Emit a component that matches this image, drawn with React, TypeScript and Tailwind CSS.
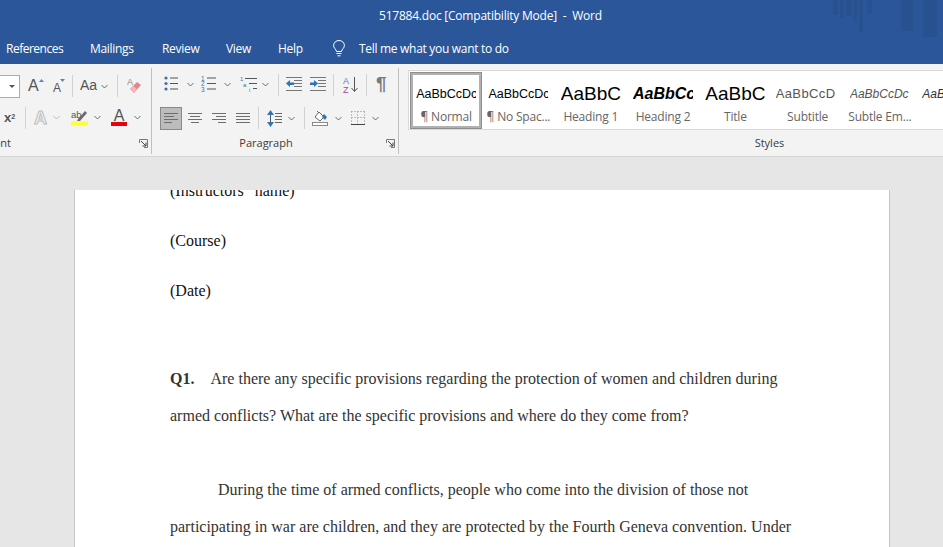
import type { ReactNode } from "react";

const ui = "font-['Open_Sans','Noto_Sans',sans-serif]";

const Chev = ({ className = "" }: { className?: string }) => (
  <svg width="7" height="5" viewBox="0 0 7 5" className={className}>
    <path d="M0.5 1l3 3 3-3" fill="none" stroke="#6a6a6a" strokeWidth="1" />
  </svg>
);

const Sep = ({ h = 22, className = "" }: { h?: number; className?: string }) => (
  <svg width="1" height={h} className={className}>
    <rect width="1" height={h} fill="#d2d2d2" />
  </svg>
);

const Launcher = () => (
  <svg width="9" height="9" viewBox="0 0 9 9">
    <path d="M.5 4V.5H8.5V8.5H5" fill="none" stroke="#777" />
    <path d="M2 2l5 5M7 3.5V7H3.5" fill="none" stroke="#444" />
  </svg>
);

const Lines = ({ rows, w = 14 }: { rows: [number, number, number][]; w?: number }) => (
  <svg width={w} height="15" viewBox={`0 0 ${w} 15`}>
    {rows.map(([x, y, l], i) => (
      <rect key={i} x={x} y={y} width={l} height="1" fill="#6d6d6d" />
    ))}
  </svg>
);

const Bullets = () => (
  <svg width="14" height="15" viewBox="0 0 14 15">
    {[2, 7.5, 13].map((y) => (
      <g key={y}>
        <circle cx="2" cy={y} r="1.6" fill="#41719c" />
        <rect x="6" y={y - 0.5} width="8" height="1" fill="#555" />
      </g>
    ))}
  </svg>
);

const Numbering = () => (
  <svg width="15" height="16" viewBox="0 0 15 16">
    {[3, 8.5, 14].map((y, i) => (
      <g key={y}>
        <text x="0" y={y + 1.5} fontSize="6.5" fill="#41719c" fontFamily="Liberation Sans">{i + 1}</text>
        <rect x="6" y={y - 1.5} width="9" height="1" fill="#555" />
      </g>
    ))}
  </svg>
);

const Multilevel = () => (
  <svg width="17" height="16" viewBox="0 0 17 16">
    <text x="0" y="5" fontSize="6" fill="#41719c" fontFamily="Liberation Sans">1</text>
    <rect x="5" y="2" width="12" height="1" fill="#555" />
    <text x="3" y="10.5" fontSize="6" fill="#41719c" fontFamily="Liberation Sans">a</text>
    <rect x="9" y="7" width="8" height="1" fill="#555" />
    <text x="9" y="15.5" fontSize="6" fill="#41719c" fontFamily="Liberation Sans">i</text>
    <rect x="13" y="12" width="4" height="1" fill="#555" />
  </svg>
);

const Indent = ({ flip = false }: { flip?: boolean }) => (
  <svg width="16" height="14" viewBox="0 0 16 14">
    <rect x="0" y="0" width="16" height="1" fill="#777" />
    <rect x="0" y="13" width="16" height="1" fill="#777" />
    {[3, 6, 9].map((y) => (
      <rect key={y} x={8} y={y} width="8" height="1" fill="#777" />
    ))}
    <path
      d={flip ? "M0 5.5h4V3l4 3.5-4 3.5V8H0z" : "M8 5.5H4V3L0 6.5 4 10V8h4z"}
      fill="#2f75b5"
    />
  </svg>
);

const Sort = () => (
  <svg width="15" height="17" viewBox="0 0 15 17">
    <text x="0" y="8" fontSize="9" fill="#5b7fbd" fontFamily="Liberation Sans">A</text>
    <text x="0" y="16.5" fontSize="9" fill="#a349a4" fontFamily="Liberation Sans">Z</text>
    <path d="M11.5 1v14M8.5 12l3 3.5 3-3.5" fill="none" stroke="#555" />
  </svg>
);

const LineSpacing = () => (
  <svg width="15" height="17" viewBox="0 0 15 17">
    <path d="M3.5 5v7" stroke="#555" />
    <path d="M3.5 0L7 5H0zM3.5 17L0 12h7z" fill="#2f75b5" />
    {[3, 6, 9, 12].map((y) => (
      <rect key={y} x="8" y={y} width="7" height="1" fill="#666" />
    ))}
  </svg>
);

const Shading = () => (
  <svg width="17" height="16" viewBox="0 0 17 16">
    <path d="M3 7l4-5 5 5-4 4z" fill="#fff" stroke="#666" />
    <path d="M5 1l2 2" stroke="#666" />
    <path d="M12 4l3 3-2 3-3-3z" fill="#2f75b5" />
    <rect x="0.5" y="12.5" width="15" height="3" fill="#fff" stroke="#888" />
  </svg>
);

const Borders = () => (
  <svg width="14" height="14" viewBox="0 0 14 14">
    <path d="M.5.5h13M.5 6.5h13M.5.5v13M6.5.5v13M13.5.5v13" stroke="#8a8a8a" strokeDasharray="1 2" fill="none" />
    <rect x="0" y="13" width="14" height="1" fill="#444" />
  </svg>
);

const Eraser = () => (
  <svg width="15" height="17" viewBox="0 0 15 17">
    <text x="0" y="8" fontSize="9" fill="#8a8a8a" fontFamily="Liberation Sans">A</text>
    <path d="M3 12l7-7 4 3-7 8z" fill="#e8858c" />
    <path d="M3 12l3-3 4 3-3 4z" fill="#f4b6ba" />
  </svg>
);

const FontSizeA = ({ size, up }: { size: number; up: boolean }) => (
  <span className="inline-flex items-start font-['Liberation_Sans'] text-[#555] leading-none" style={{ fontSize: size }}>
    A
    <svg width="5" height="3" viewBox="0 0 5 3" className={up ? "mt-[1px]" : "-ml-[1px] -mt-[3px]"}>
      <path d={up ? "M2.5 0L5 3H0z" : "M0 0h5L2.5 3z"} fill="#5b87b8" />
    </svg>
  </span>
);

const TextEffects = () => (
  <svg width="15" height="15" viewBox="0 0 15 15">
    <text x="0" y="14" fontSize="18" fill="#f3f3f3" stroke="#bdbdbd" strokeWidth="1" fontFamily="Liberation Sans" fontWeight="bold">A</text>
  </svg>
);

const Highlighter = () => (
  <svg width="17" height="17" viewBox="0 0 17 17">
    <text x="0" y="9" fontSize="9.5" fill="#555" fontFamily="Liberation Sans">ab</text>
    <path d="M7 10l7-8 2 2-7 8H6z" fill="#6b6b6b" />
    <rect x="0" y="12.5" width="17" height="4" fill="#ffff33" />
  </svg>
);

const Bulb = () => (
  <svg width="12" height="17" viewBox="0 0 12 17">
    <path d="M3.5 11.5C3 9 .6 8 .6 5.5a5.4 5 0 0 1 10.8 0c0 2.5-2.4 3.5-2.9 6z" fill="none" stroke="#fff" />
    <path d="M3.5 13.5h5M4.5 15.8h3" stroke="#fff" />
  </svg>
);

const Style = ({
  preview,
  label,
  previewClass,
  selected,
}: {
  preview: string;
  label: string;
  previewClass: string;
  selected?: boolean;
}) => (
  <div
    className={`w-[72.3px] h-[57px] shrink-0 flex flex-col items-center overflow-hidden ${
      selected ? "border-[3px] border-[#b1b1b1] outline outline-1 outline-[#8e8e8e] -outline-offset-1" : "border-[3px] border-transparent"
    }`}
  >
    <div className={`h-[33px] pt-[6px] w-[60px] overflow-hidden whitespace-nowrap flex items-center font-['Liberation_Sans'] ${previewClass}`}>
      {preview}
    </div>
    <div className="text-[12px] leading-[16px] mt-[1px] text-[#666] tracking-[-0.2px] whitespace-nowrap">{label}</div>
  </div>
);

const Tab = ({ children, className = "" }: { children: ReactNode; className?: string }) => (
  <span className={`text-white text-[12px] leading-none ${className}`}>{children}</span>
);

export default function App() {
  return (
    <div className={`w-[943px] h-[547px] overflow-hidden flex flex-col bg-[#e6e6e6] ${ui}`}>
      {/* title bar + tabs */}
      <div className="relative h-[64px] shrink-0 bg-[#2b579a]">
        <svg width="110" height="40" viewBox="0 0 110 40" className="absolute right-0 top-0">
          <g fill="#28528f">
            <rect x="0" y="0" width="5" height="15" />
            <rect x="7" y="0" width="4" height="18" />
            <rect x="13" y="0" width="6" height="16" />
            <rect x="21" y="0" width="3" height="22" />
            <rect x="26" y="0" width="4" height="32" />
            <rect x="34" y="0" width="5" height="14" />
            <rect x="68" y="0" width="12" height="31" />
            <rect x="90" y="0" width="14" height="37" />
          </g>
        </svg>
        <div className="h-[32px] pl-[379px] flex items-center text-white text-[12px] tracking-[-0.22px] whitespace-pre">
          517884.doc [Compatibility Mode]  -  Word
        </div>
        <div className="h-[32px] pt-[1px] flex items-center tracking-[-0.3px]">
          <Tab className="ml-[6px] w-[84px] tracking-[-0.5px]">References</Tab>
          <Tab className="w-[72px]">Mailings</Tab>
          <Tab className="w-[64px]">Review</Tab>
          <Tab className="w-[52px]">View</Tab>
          <Tab className="w-[55px]">Help</Tab>
          <Bulb />
          <Tab className="ml-[14px]">Tell me what you want to do</Tab>
        </div>
      </div>

      {/* ribbon */}
      <div className="h-[93px] shrink-0 flex bg-[#f3f3f3] border-b border-[#d4d4d4]">
        {/* font group, cut off on the left */}
        <div className="w-[151px] shrink-0 flex flex-col overflow-hidden">
          <div className="h-[38px] pt-[11px] flex items-start">
            <div className="w-[20px] h-[23px] bg-white border border-l-0 border-[#ababab] flex items-center justify-end pr-[4px]">
              <svg width="6" height="3"><path d="M0 0h6L3 3z" fill="#555" /></svg>
            </div>
            <div className="ml-[8px] h-[19px] flex items-end w-[25px]"><FontSizeA size={16} up /></div>
            <div className="h-[19px] flex items-end w-[19px]"><FontSizeA size={12} up={false} /></div>
            <Sep h={22} />
            <span className="ml-[7px] mt-[1px] w-[21px] text-[14px] leading-[18px] font-['Liberation_Sans'] text-[#555]">Aa</span>
            <Chev className="mt-[9px]" />
            <Sep h={22} className="ml-[9px]" />
            <span className="ml-[9px] mt-[2px] flex"><Eraser /></span>
          </div>
          <div className="h-[29px] pt-[2px] flex items-center">
            <span className="ml-[4px] w-[21px] font-['Liberation_Sans'] font-bold text-[13px] text-[#555] leading-none">
              x<sup className="text-[7px]">2</sup>
            </span>
            <Sep h={22} />
            <span className="ml-[8px] flex"><TextEffects /></span>
            <Chev className="ml-[4px] opacity-40" />
            <span className="ml-[11px] flex"><Highlighter /></span>
            <Chev className="ml-[6px]" />
            <span className="ml-[10px] flex flex-col items-center w-[16px] font-['Liberation_Sans'] text-[16px] leading-[13px] text-[#555]">
              A
              <span className="w-[16px] h-[4px] bg-[#e8000b]" />
            </span>
            <Chev className="ml-[7px]" />
          </div>
          <div className="flex-1 flex items-center justify-between pr-[3px] -ml-[12px] text-[11px] text-[#3c3c3c]">
            <span>Font</span>
            <Launcher />
          </div>
        </div>
        <div className="w-px bg-[#bfbfbf] my-[4px] mb-[2px]" />

        {/* paragraph group */}
        <div className="w-[246px] shrink-0 flex flex-col">
          <div className="h-[38px] pt-[12px] flex items-start pl-[12px]">
            <Bullets />
            <Chev className="ml-[9px] mt-[6px]" />
            <span className="ml-[7px] flex"><Numbering /></span>
            <Chev className="ml-[8px] mt-[6px]" />
            <span className="ml-[9px] flex"><Multilevel /></span>
            <Chev className="ml-[5px] mt-[6px]" />
            <Sep h={22} className="ml-[9px] -mt-[2px]" />
            <span className="ml-[7px] mt-[1px] flex"><Indent /></span>
            <span className="ml-[8px] mt-[1px] flex"><Indent flip /></span>
            <Sep h={22} className="ml-[7px] -mt-[2px]" />
            <span className="ml-[9px] flex"><Sort /></span>
            <Sep h={22} className="ml-[8px] -mt-[2px]" />
            <span className="ml-[9px] -mt-[3px] text-[19px] leading-[22px] font-['Liberation_Sans'] font-bold text-[#7a7a7a]">¶</span>
          </div>
          <div className="h-[29px] flex items-center pl-[8px] pt-[3px]">
            <div className="w-[22px] h-[23px] bg-[#bcbcbc] border border-[#8a8a8a] flex items-center justify-center">
              <Lines w={14} rows={[[0, 2, 14], [0, 5, 10], [0, 8, 14], [0, 11, 8]]} />
            </div>
            <span className="ml-[6px] flex"><Lines rows={[[0, 2, 14], [2, 5, 10], [0, 8, 14], [3, 11, 8]]} /></span>
            <span className="ml-[10px] flex"><Lines rows={[[0, 2, 14], [4, 5, 10], [0, 8, 14], [6, 11, 8]]} /></span>
            <span className="ml-[10px] flex"><Lines rows={[[0, 2, 14], [0, 5, 14], [0, 8, 14], [0, 11, 14]]} /></span>
            <Sep h={22} className="ml-[8px]" />
            <span className="ml-[8px] flex"><LineSpacing /></span>
            <Chev className="ml-[6px]" />
            <Sep h={22} className="ml-[9px]" />
            <span className="ml-[7px] flex"><Shading /></span>
            <Chev className="ml-[6px]" />
            <span className="ml-[9px] flex"><Borders /></span>
            <Chev className="ml-[7px]" />
          </div>
          <div className="flex-1 flex items-center pr-[3px] text-[11px] text-[#3c3c3c]">
            <span className="flex-1 text-center pr-[6px]">Paragraph</span>
            <Launcher />
          </div>
        </div>
        <div className="w-px bg-[#bfbfbf] my-[4px] mb-[2px]" />

        {/* styles gallery */}
        <div className="flex-1 min-w-0 flex flex-col overflow-hidden">
          <div className="ml-[9px] mt-[6px] h-[60px] bg-white border border-[#d9d9d9] border-r-0 flex items-center pl-[1px] overflow-hidden">
            <Style selected preview="AaBbCcDc" label="¶ Normal" previewClass="text-[12.5px] text-black" />
            <Style preview="AaBbCcDc" label="¶ No Spac..." previewClass="text-[12.5px] text-black" />
            <Style preview="AaBbC" label="Heading 1" previewClass="text-[19px] text-black" />
            <Style preview="AaBbCc" label="Heading 2" previewClass="text-[16px] font-bold italic text-black" />
            <Style preview="AaBbC" label="Title" previewClass="text-[19px] text-black" />
            <Style preview="AaBbCcD" label="Subtitle" previewClass="-ml-[4px] text-[13px] text-[#555] tracking-[0.4px]" />
            <Style preview="AaBbCcDc" label="Subtle Em..." previewClass="text-[12px] italic text-[#555]" />
            <Style preview="AaBbCcDc" label="Em" previewClass="text-[12px] italic text-[#333]" />
          </div>
          <div className="flex-1 flex items-center justify-center pl-[197px] text-[11px] text-[#3c3c3c]">Styles</div>
        </div>
      </div>

      {/* document */}
      <div className="flex-1 min-h-0 overflow-hidden pt-[33px] pl-[74px]">
        <div className="w-[816px] h-[400px] overflow-hidden bg-white border-x border-[#c6c6c6] pl-[95px] font-['Liberation_Serif',serif] text-[16px] text-[#333]">
          <p className="-mt-[17px] h-[50px] leading-[36px] text-[#111] whitespace-pre">(Instructors'  name)</p>
          <p className="h-[50px] leading-[36px] text-[#111]">(Course)</p>
          <p className="h-[50px] leading-[36px] text-[#111]">(Date)</p>
          <p className="mt-[37px] leading-[37px] whitespace-nowrap">
            <b className="mr-[16px]">Q1.</b>Are there any specific provisions regarding the protection of women and children during
          </p>
          <p className="leading-[37px] whitespace-nowrap">
            armed conflicts? What are the specific provisions and where do they come from?
          </p>
          <p className="mt-[37px] leading-[37px] whitespace-nowrap indent-[48px]">
            During the time of armed conflicts, people who come into the division of those not
          </p>
          <p className="leading-[37px] whitespace-nowrap">
            participating in war are children, and they are protected by the Fourth Geneva convention. Under
          </p>
        </div>
      </div>
    </div>
  );
}
